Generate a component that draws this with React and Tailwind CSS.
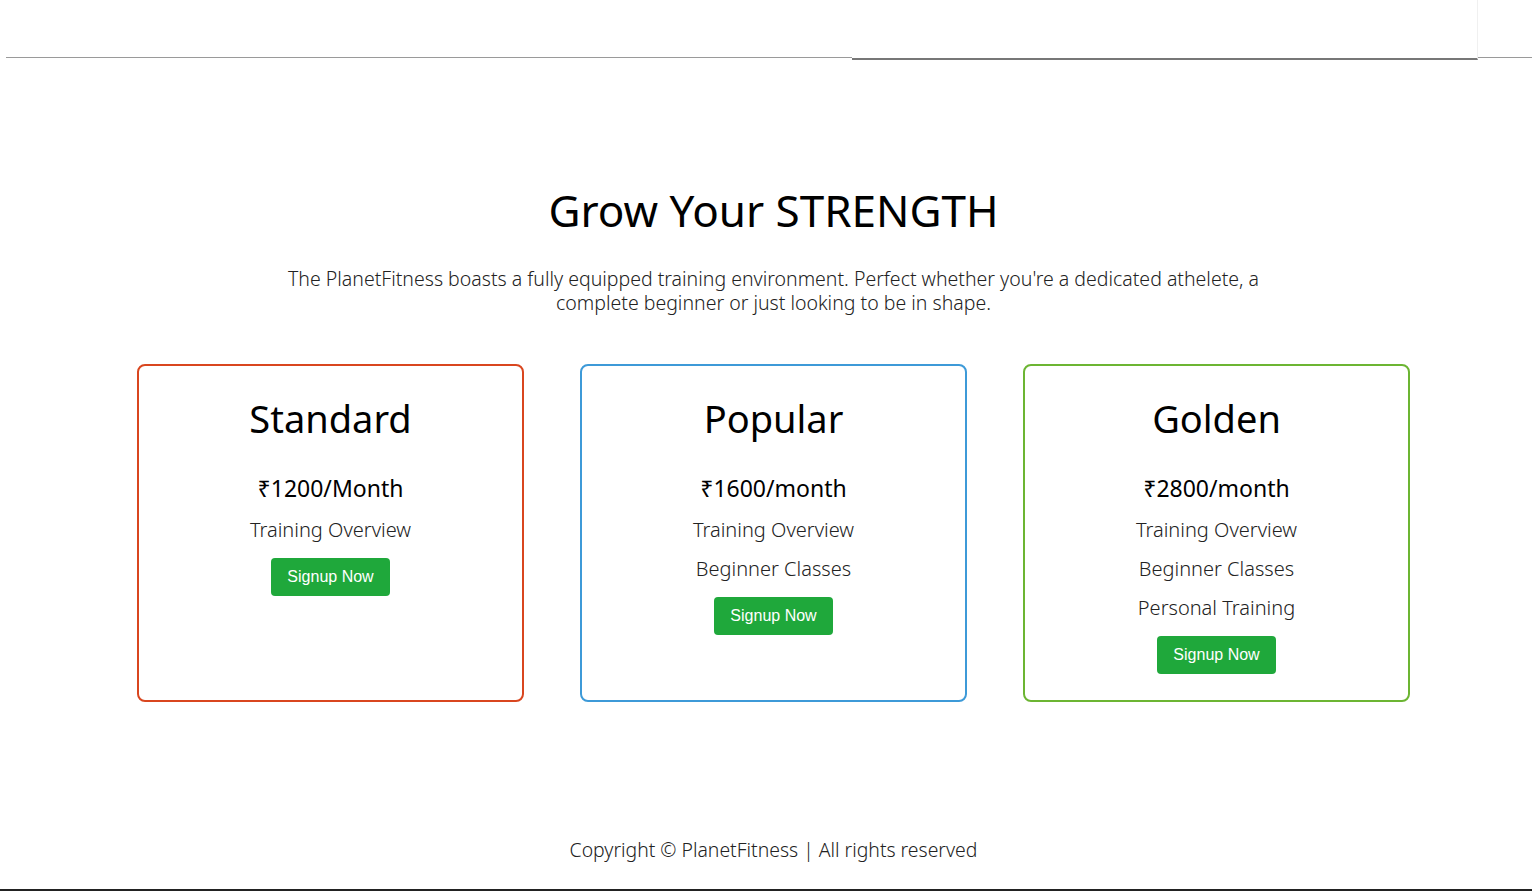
import React from "react"

const plans = [
  {
    name: "Standard",
    price: "₹1200/Month",
    items: ["Training Overview"],
    border: "border-[#d9461f]",
  },
  {
    name: "Popular",
    price: "₹1600/month",
    items: ["Training Overview", "Beginner Classes"],
    border: "border-[#3d9ad8]",
  },
  {
    name: "Golden",
    price: "₹2800/month",
    items: ["Training Overview", "Beginner Classes", "Personal Training"],
    border: "border-[#6cb533]",
  },
]

const PlanCard = ({ plan }) => {
  return (
    <div className={`w-[387px] h-[338px] border-2 ${plan.border} rounded-lg flex flex-col items-center pt-[28px]`}>
      <h3 className="text-[38px] leading-[48px] text-black">{plan.name}</h3>
      <p className="mt-[31px] text-[23px] leading-[30px] text-black">{plan.price}</p>
      <div className="mt-[7px] flex flex-col items-center">
        {plan.items.map((item) => (
          <p key={item} className="text-[20px] leading-[39px] font-light text-[#222]">
            {item}
          </p>
        ))}
      </div>
      <button className="mt-[9px] w-[119px] h-[38px] bg-[#1fa83b] text-white rounded text-[16px] font-['Liberation_Sans',Arial,sans-serif]">
        Signup Now
      </button>
    </div>
  )
}

const App = () => {
  return (
    <div className="min-h-[891px] bg-white font-['Noto_Sans',sans-serif] flex flex-col">
      <div className="flex h-[60px]">
        <div className="w-[6px]" />
        <div className="w-[846px] h-[58px] border-b border-[#9a9a9a]" />
        <div className="w-[626px] h-[60px] border-b-2 border-[#777] border-r border-r-[#f0f0f0]" />
        <div className="flex-1 h-[58px] border-b border-[#9a9a9a]" />
      </div>

      <div className="flex flex-col items-center pl-[15px]">
        <h1 className="mt-[120px] text-[44px] leading-[60px] text-black">Grow Your STRENGTH</h1>
        <p className="mt-[27px] w-[1000px] text-center text-[19.5px] leading-[24px] font-light text-[#222]">
          The PlanetFitness boasts a fully equipped training environment. Perfect whether you're a dedicated athelete, a
          complete beginner or just looking to be in shape.
        </p>
        <div className="mt-[49px] flex gap-[56px]">
          {plans.map((plan) => (
            <PlanCard key={plan.name} plan={plan} />
          ))}
        </div>
      </div>

      <footer className="mt-auto flex flex-col items-center">
        <p className="pl-[15px] text-[19.4px] leading-[24px] font-light text-[#222]">
          Copyright © PlanetFitness | All rights reserved
        </p>
        <div className="mt-[27px] w-full h-[2px] bg-[#222]" />
      </footer>
    </div>
  )
}

export default App
